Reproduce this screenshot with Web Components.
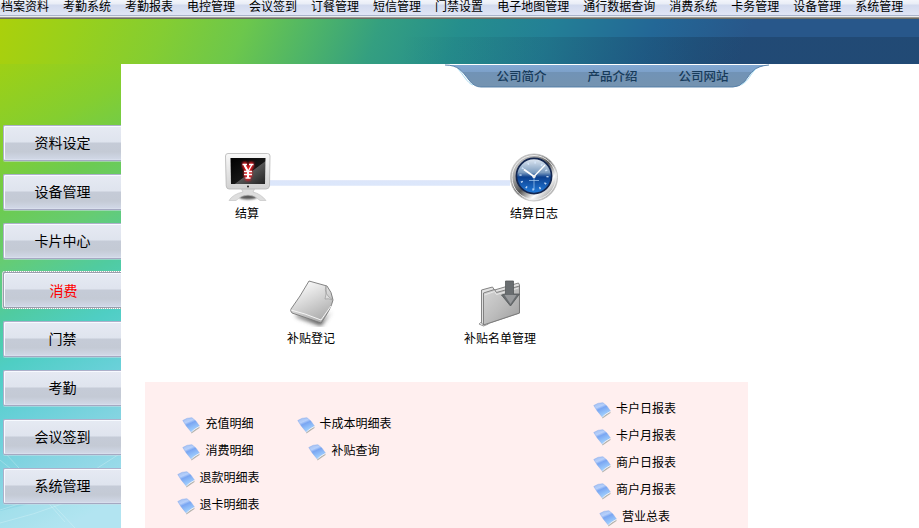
<!DOCTYPE html>
<html lang="zh-CN">
<head>
<meta charset="utf-8">
<title>一卡通管理系统</title>
<style>
html,body{margin:0;height:100%;overflow:hidden;background:#fff}
body{font:12px/14px "Liberation Sans","Noto Sans CJK SC",sans-serif;color:#000}
</style>
</head>
<body>
<card-app></card-app>
<script>
const define = (name, html, after) => {
  const t = document.createElement('template');
  t.innerHTML = html;
  customElements.define(name, class extends HTMLElement {
    constructor() {
      super();
      this.attachShadow({mode: 'open'}).append(t.content.cloneNode(true));
    }
    connectedCallback() { if (after) after(this, this.shadowRoot); }
  });
};

define('menu-item', `<style>:host{display:block;flex:none;white-space:nowrap}</style><slot></slot>`);

define('menu-bar', `<style>
:host{display:flex;gap:14px;box-sizing:border-box;height:19px;padding:0 0 0 1px;line-height:15px;
background:linear-gradient(#f3f5fb 0,#e9edf6 4px,#d2daee 5px,#e0e5f5 15px,#a9b3cb 15px,#a9b3cb 16px,#eceeee 16px,#eceeee 17px,#9b9996 17px,#9b9996 18px,#6e6d62 18px)}
</style><slot></slot>`);

define('app-banner', `<style>
:host{display:block;height:45px;background:
linear-gradient(90deg,transparent 400px,rgba(12,32,50,.24) 700px) 0 18px/100% 27px no-repeat,
linear-gradient(112deg,#abd00b 0,#98d01c 75px,#84cd32 155px,#6cc74c 230px,#4fb567 292px,#349f80 355px,#258e8d 430px,#237f96 515px,#236796 610px,#28578a 700px,#28578a 100%)}
</style>`);

define('side-button', `<style>
:host{display:block;position:relative;box-sizing:border-box;height:36px;margin-left:3px;
border:1px solid #adb0ca;border-right:0;border-bottom-color:#a5a8c2;border-radius:2px 0 0 2px;
box-shadow:inset 1px 1px #f7faff,inset 0 -1px #d8deec,0 1px 0 rgba(200,220,230,.55);
background:linear-gradient(#e6eaf3 0,#dfe4ee 46%,#c5cbd7 51%,#c4cad5 76%,#d2d9e8 100%);
font-size:14px;line-height:35px;text-align:center}
:host([active]){color:#f00;line-height:37px;padding-left:2px;box-shadow:inset 1px 1px #f7faff,inset 0 -1px #d8deec,0 0 0 1px #fff;border-color:#999eae;outline:1px dotted #a9b6ae;outline-offset:0}
</style><slot></slot>`);

define('side-nav', `<style>
:host{display:flex;position:relative;flex-direction:column;gap:13px;box-sizing:border-box;width:121px;padding-top:61px;overflow:hidden;
background:linear-gradient(152deg,#9ed015 0,#84ce30 75px,#6ccb51 130px,#66cc72 175px,#50cba0 225px,#4fcec4 270px,#68d0d8 320px,#86d4e2 370px,#a6dfee 440px)}
svg{position:absolute;left:0;bottom:0;width:121px;height:100px}
::slotted(*){z-index:1}
</style><svg viewBox="0 0 121 100" fill="none"><path d="M0 32 38 63 65 94M0 82Q65 64 121 25M0 95Q70 78 121 48M5 25 75 100" stroke="#fff" opacity=".24"/><path d="M0 83Q70 67 121 43V100H0Z" fill="#e7ffff" opacity=".18"/></svg><slot></slot>`);

define('link-tabs', `<style>
:host{display:flex;box-sizing:border-box;position:relative;width:324px;height:24px;margin-left:324px;padding:5px 0 0 52px;gap:41px;color:#173b5b;font-size:12.5px;line-height:17px;font-weight:500}
svg{position:absolute;left:0;top:0}
::slotted(*){z-index:1;position:relative;left:-.5px}
</style><svg width="324" height="24"><defs><linearGradient id="g" x2="0" y2="1"><stop stop-color="#82a8d2"/><stop offset=".3" stop-color="#7da1ca"/><stop offset=".34" stop-color="#7193b6"/><stop offset="1" stop-color="#7493b0"/></linearGradient></defs>
<path d="M0 1H324C309 2 306 9 300 17Q295 23 288 23H36Q29 23 24 16C17 7 13 1 0 1Z" fill="url(#g)"/><path d="M0 1C13 1 17 7 24 16Q29 23 36 23H288Q295 23 300 17C306 9 309 2 324 1" fill="none" stroke="#4f7aa5" stroke-width=".9"/><path d="M13 5C18 10 22 19 28 21M311 5C305 10 304 17 296 21" fill="none" stroke="#a8daf0"/></svg><slot></slot>`);

const art = {
monitor: `<defs><linearGradient id="a" x2="0" y2="1"><stop stop-color="#f9f9f9"/><stop offset="1" stop-color="#d1d1d1"/></linearGradient><linearGradient id="b" x2="1" y2="1"><stop stop-color="#000"/><stop offset=".55" stop-color="#161616"/><stop offset=".57" stop-color="#555"/><stop offset="1" stop-color="#222"/></linearGradient><filter id="f" x="-50%" y="-50%" width="200%" height="200%"><feGaussianBlur stdDeviation=".8"/></filter></defs>
<ellipse cx="26" cy="45" rx="9" ry="2.5" fill="#555" filter="url(#f)"/><path d="M19 36H33L31 40Q39 42 44 48.500H38Q33 43 26 43T14 48.500H7Q11 42 21 40Z" fill="#dedede" stroke="#bdbdbd" stroke-width=".6"/>
<path d="M6 1.500H45.500Q48 1.500 48 4L47.500 34Q47 37 44 37H7Q4.500 37 4.200 34L3.500 4Q3.500 1.500 6 1.500Z" fill="url(#a)" stroke="#b5b5b5" stroke-width=".8"/><path d="M8.500 6H43.500L43 32H9Z" fill="url(#b)"/><circle cx="26" cy="34.500" r="1" fill="#222"/>
<path d="M20.500 12.500H25M27 12.500H31.500M22 12.500 26 19.500 30 12.500M26 19V26M22 19.500H30M22 22.500H30M23.500 26H28.500" fill="none" stroke="#e51c20" stroke-width="5" filter="url(#f)"/><path d="M20.500 12.500H25M27 12.500H31.500M22 12.500 26 19.500 30 12.500M22 19.500H30M22 22.500H30M23.500 26H28.500" fill="none" stroke="#fff" stroke-width="1.300"/><path d="M22.500 13 26 19.500V26" fill="none" stroke="#fff" stroke-width="2"/>`,
clock: `<defs><linearGradient id="a" x2="1" y2="1"><stop stop-color="#eee"/><stop offset=".3" stop-color="#a0a0a0"/><stop offset=".5" stop-color="#555"/><stop offset=".7" stop-color="#fff"/><stop offset=".85" stop-color="#aaa"/><stop offset="1" stop-color="#777"/></linearGradient><linearGradient id="b" x2="0" y2="1"><stop stop-color="#e4ebf4"/><stop offset=".4" stop-color="#7d9dc0"/><stop offset=".53" stop-color="#0c408f"/><stop offset="1" stop-color="#237ddd"/></linearGradient></defs>
<circle cx="25" cy="25.500" r="23.500" fill="url(#a)" stroke="#bbb" stroke-width=".8"/><circle cx="25" cy="25.500" r="22" fill="none" stroke="#eee" stroke-width="1"/><circle cx="25" cy="24" r="17.600" fill="url(#b)" stroke="#142750" stroke-width="1.700"/><circle cx="25" cy="24" r="13.500" fill="none" stroke="#d8eaff" stroke-width="2.200" stroke-dasharray="1.500 5.568" opacity=".85"/><path d="M15 17.500 25 24.500" stroke="#fff" stroke-width="1.800"/><path d="M25 24.500 36 13" stroke="#fff" stroke-width="1.300"/><path d="M25 24.500V38M20 28.500H30" stroke="#a8cdf2" stroke-width=".7"/><circle cx="25" cy="24.500" r="1.700" fill="#eee"/>`,
paper: `<defs><linearGradient id="a" x1=".2" x2=".7" y2="1"><stop stop-color="#fff"/><stop offset=".4" stop-color="#ddd"/><stop offset="1" stop-color="#a8a8a8"/></linearGradient><filter id="f" x="-30%" y="-30%" width="160%" height="180%"><feGaussianBlur stdDeviation="2"/></filter></defs>
<g transform="translate(1 3)"><path d="M10 37 34 46 44 32 35 40 8 34Z" fill="#555" filter="url(#f)"/><path d="M22 1 40 6Q45 12 46 20Q44 29 34 43Q20 38 5 33Q3 31 4 29Q13 17 22 1Z" fill="url(#a)" stroke="#777" stroke-width=".9"/><path d="M4 30Q17 33 34 40L44 26" fill="none" stroke="#f4f4f4"/><path d="M39 6Q36 14 46 20Q41 18 38 19Q40 13 39 6Z" fill="#ddd" stroke="#999" stroke-width=".7"/></g>`,
folder: `<defs><linearGradient id="a" x2="1" y2="1"><stop stop-color="#d6d6d6"/><stop offset=".5" stop-color="#bdbdbd"/><stop offset="1" stop-color="#9c9c9c"/></linearGradient></defs>
<g transform="translate(1.500 2)"><path d="M5 11 16 8 18 11 42 4 43 6V34L7 46 5 44Z" fill="#e2e2e2" stroke="#777" stroke-width=".9"/><path d="M7 14 18 10.500 20 13.500 43 7V34L7 46Z" fill="url(#a)" stroke="#777" stroke-width=".9"/><path d="M8 16 18 12.500 20 15.500 42 9" fill="none" stroke="#e8e8e8"/><path d="M29 2H37V15H43L34 27 25 16 29 15Z" fill="#696d70" stroke="#55595b" stroke-width=".8"/><path d="M28 16H40L34 25Z" fill="#97999b"/><path d="M5 43 2.500 45 7 47 12 45" stroke="#999" fill="none"/></g>`
};
define('flow-node', `<style>
:host{position:absolute;display:flex;flex-direction:column;align-items:center;transform:translateX(-50%);white-space:nowrap}
svg{width:50px;height:50px;margin-bottom:5px}
</style><svg viewBox="0 0 50 50"></svg><span><slot></slot></span>`, (el, root) => {
  root.querySelector('svg').innerHTML = art[el.getAttribute('icon')];
});

define('flow-canvas', `<style>
:host{display:block;position:relative;height:294px}
i{position:absolute;left:149px;top:92px;width:240px;height:6px;background:linear-gradient(#e9edfa 0,#dce6fa 1px,#dce7fb 5px,#eef2fb 6px)}
</style><i></i><slot></slot>`);

define('report-link', `<style>
:host{display:flex;align-items:center;height:27px;gap:5px;white-space:nowrap}
svg{width:18px;height:18px;flex:none;position:relative;top:1px}
</style><svg viewBox="0 0 18 18"><defs><linearGradient id="a" x2=".5" y2="1"><stop stop-color="#9dbbf0"/><stop offset=".35" stop-color="#b7d0fb"/><stop offset=".5" stop-color="#7aa6f2"/><stop offset="1" stop-color="#a4d4ff"/></linearGradient></defs><path d="M9 16 17.500 10.500V12L9.500 17.500Z" fill="#b5b4ae"/><path d="M.8 4.500Q5 1.500 10 1.800 14.500 4.500 17.300 10 13 12 9.300 16 4 10.500 .8 4.500Z" fill="url(#a)" stroke="#83a9ea" stroke-width=".5"/><path d="M9.300 16Q13 12.500 17.500 10.300" fill="none" stroke="#eef8ff" stroke-width=".8"/></svg><slot></slot>`);

define('report-column', `<style>:host{display:flex;flex-direction:column;align-items:center}</style><slot></slot>`);

define('report-panel', `<style>
:host{display:grid;grid-template-columns:83px 95px 1fr;column-gap:37px;align-items:start;box-sizing:border-box;width:603px;flex:1;margin-left:24px;padding:28px 72px 0 31.5px;background:#ffefef;overflow:hidden}
::slotted(:last-child){justify-self:end}
</style><slot></slot>`);

define('card-app', `<style>
:host{display:flex;flex-direction:column;height:100vh}
.body{display:flex;flex:1;min-height:0}
main{flex:1;display:flex;flex-direction:column;min-width:0}
</style>
<menu-bar></menu-bar><app-banner></app-banner>
<div class="body"><side-nav></side-nav><main>
<link-tabs><span>公司简介</span><span>产品介绍</span><span>公司网站</span></link-tabs>
<flow-canvas>
<flow-node icon="monitor" style="left:126px;top:64px">结算</flow-node>
<flow-node icon="clock" style="left:413px;top:64px">结算日志</flow-node>
<flow-node icon="paper" style="left:190px;top:189px">补贴登记</flow-node>
<flow-node icon="folder" style="left:379px;top:189px">补贴名单管理</flow-node>
</flow-canvas>
<report-panel></report-panel>
</main></div>`, (el, root) => {
  const fill = (parent, tag, words) => words.split(' ').forEach(w => {
    const n = document.createElement(tag);
    n.textContent = w;
    if (w === '消费') n.setAttribute('active', '');
    parent.append(n);
  });
  fill(root.querySelector('menu-bar'), 'menu-item', '档案资料 考勤系统 考勤报表 电控管理 会议签到 订餐管理 短信管理 门禁设置 电子地图管理 通行数据查询 消费系统 卡务管理 设备管理 系统管理');
  fill(root.querySelector('side-nav'), 'side-button', '资料设定 设备管理 卡片中心 消费 门禁 考勤 会议签到 系统管理');
  [['充值明细 消费明细 退款明细表 退卡明细表', 0], ['卡成本明细表 补贴查询', 0], ['卡户日报表 卡户月报表 商户日报表 商户月报表 营业总表', -15]].forEach(([words, top]) => {
    const c = document.createElement('report-column');
    c.style.marginTop = top + 'px';
    fill(c, 'report-link', words);
    root.querySelector('report-panel').append(c);
  });
});
</script>
</body>
</html>
